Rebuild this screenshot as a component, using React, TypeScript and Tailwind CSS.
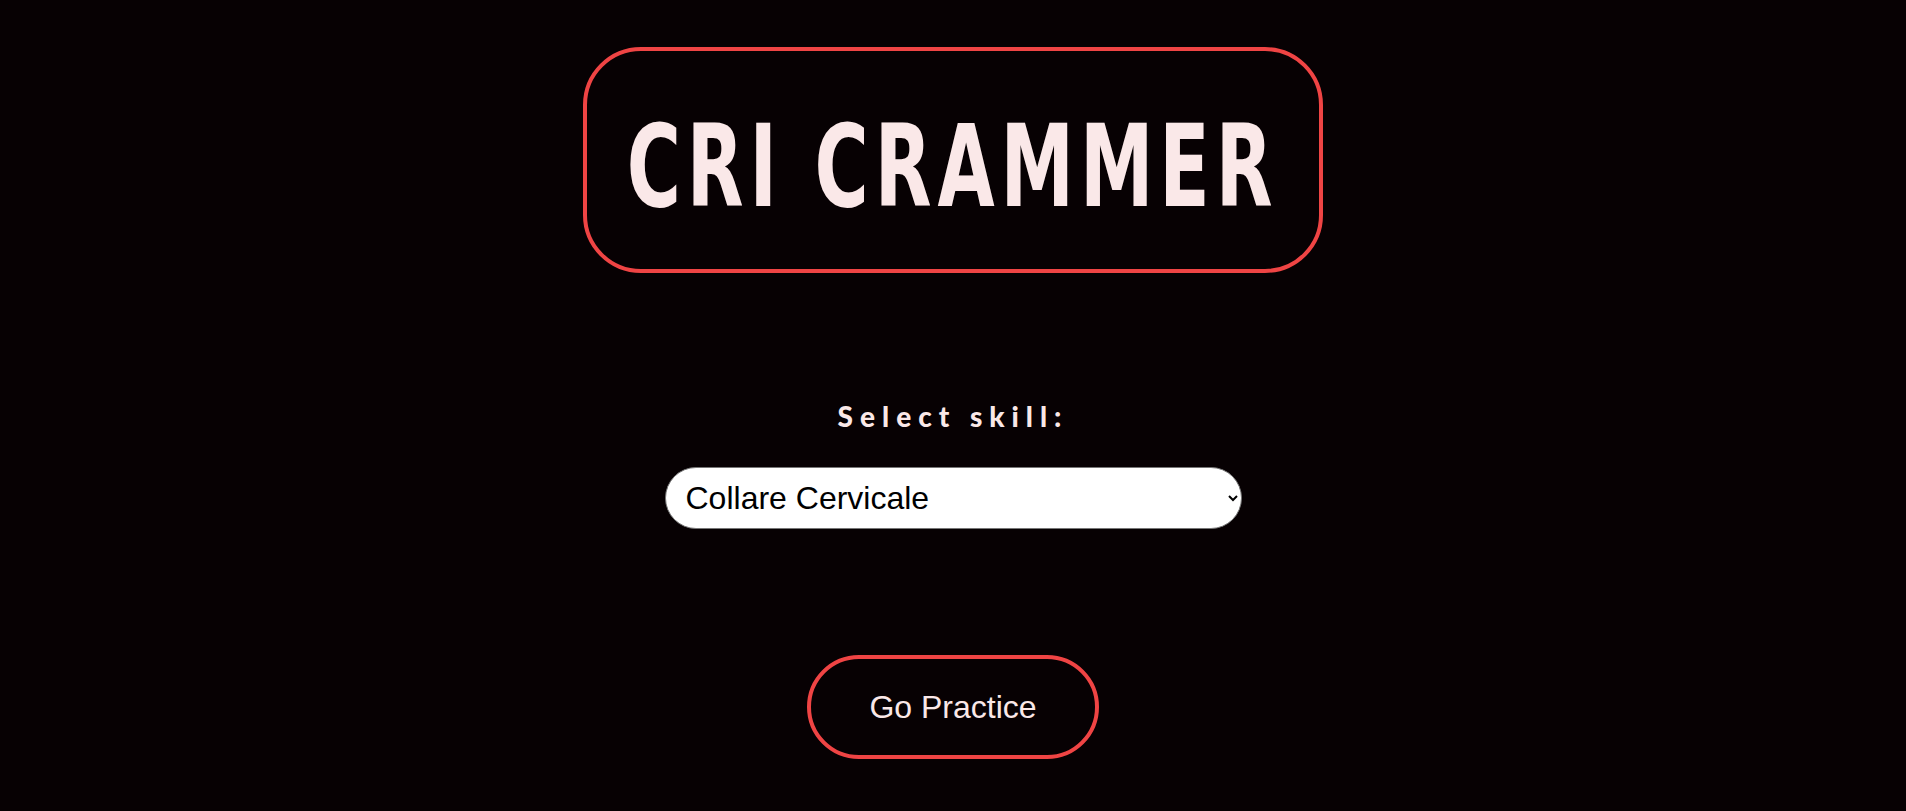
import React from "react";

export default function App() {
  return (
    <div className="min-h-screen w-full bg-[#070103] flex flex-col items-center pt-[47px]">
      <div className="w-[740px] h-[226px] border-4 border-[#ef4444] rounded-[58px] flex items-center justify-center pt-[14px]">
        <h1 className="text-[#fae8e8] text-[114px] font-bold leading-none tracking-[0.072em] scale-x-[0.72] whitespace-nowrap font-['Liberation_Sans_Narrow','DejaVu_Sans_Condensed','Liberation_Sans',sans-serif]">
          CRI CRAMMER
        </h1>
      </div>

      <label
        htmlFor="skill"
        className="mt-[126px] text-[#fae8e8] text-[28px] font-black leading-[34px] tracking-[7px] font-['Lato','Noto_Sans',sans-serif]"
      >
        Select skill:
      </label>

      <select
        id="skill"
        defaultValue="collare"
        className="mt-[34px] w-[577px] h-[62px] rounded-[31px] bg-white text-black text-[32px] pl-[16px] pr-[10px] border border-[#767676] font-['Liberation_Sans',Arial,sans-serif]"
      >
        <option value="collare">Collare Cervicale</option>
        <option value="tavola">Tavola Spinale</option>
        <option value="ked">KED</option>
      </select>

      <button className="mt-[126px] w-[292px] h-[104px] rounded-full border-4 border-[#ef4444] bg-transparent text-[#fae8e8] text-[32px] font-['Liberation_Sans',Arial,sans-serif]">
        Go Practice
      </button>
    </div>
  );
}
